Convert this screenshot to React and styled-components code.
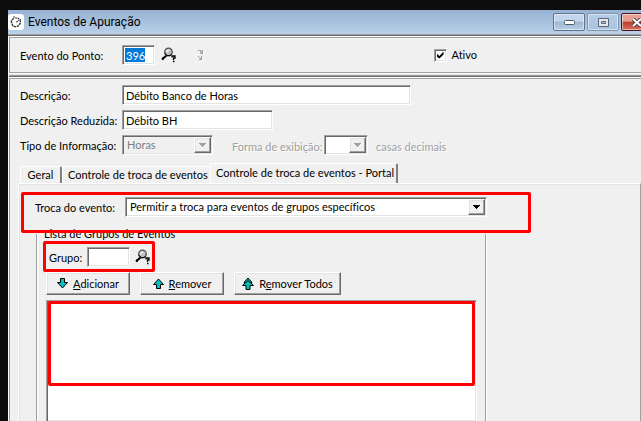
import React from "react";
import styled, { createGlobalStyle, css } from "styled-components";

const Global = createGlobalStyle`
  * { box-sizing: border-box; }
  html, body { margin: 0; background: #0d0d0d; overflow: hidden; }
  body, button, input, select {
    font-family: Lato, "Liberation Sans", sans-serif;
    font-size: 11px;
    line-height: 14px;
    font-variant-ligatures: none;
    color: #000;
  }
`;

const sunken = css`
  border: 1px solid;
  border-color: #a0a0a0 #fff #fff #a0a0a0;
  box-shadow: inset 1px 1px #696969, inset -1px -1px #e3e3e3;
`;
const raised = css`
  border: 1px solid;
  border-color: #fff #696969 #696969 #fff;
  box-shadow: inset -1px -1px #a0a0a0, inset 1px 1px #e3e3e3;
`;
const mark = css`
  outline: 3px solid #f00;
  outline-offset: -3px;
  border-radius: 2px;
`;

const Desktop = styled.div`
  display: flex;
  height: 100vh;
  padding: 10px 0 0 8px;
  overflow: hidden;
`;
const Window = styled.main`
  flex: 1;
  min-width: 0;
  display: flex;
  flex-direction: column;
  background: #f0f0f0;
`;
const TitleBar = styled.header`
  flex: none;
  display: flex;
  align-items: center;
  height: 24px;
  overflow: hidden;
  background: linear-gradient(#96b1d2, #b9d1ea);
`;
const Title = styled.h1`
  flex: 1;
  margin: 0 0 0 4px;
  font: 12px/16px Roboto, "Open Sans", sans-serif;
`;
const Controls = styled.div`
  display: flex;
  gap: 2px;
  margin-right: -12px;
`;
const WindowButton = styled.button`
  display: grid;
  place-items: center;
  width: 32px;
  height: 18px;
  padding: 0;
  border: 1px solid ${(p) => (p.$kind === "close" ? "#4b1420" : p.$kind === "muted" ? "#8093ad" : "#5f718b")};
  border-radius: 2px;
  box-shadow: inset 0 0 0 1px rgba(255, 255, 255, 0.5);
  background: ${(p) =>
    p.$kind === "close"
      ? "linear-gradient(#e6a192 0 45%, #bd3f2b 50%, #d4705a)"
      : p.$kind === "muted"
        ? "linear-gradient(#b4cbe5, #a9c3df)"
        : "linear-gradient(#c3d5ea 0 45%, #9db7d5 50%, #b5cde6)"};
`;
const TopEdge = styled.div`
  flex: none;
  height: 3px;
  background: linear-gradient(#a0a0a0 0 1px, #696969 1px 2px, #fff 2px);
`;
const Divider = styled.div`
  flex: none;
  height: 5px;
  background: linear-gradient(#fff 0 1px, #e3e3e3 1px 2px, #a0a0a0 2px 3px, #696969 3px 4px, #fff 4px);
`;
const Body = styled.div`
  flex: 1;
  min-height: 0;
  display: flex;
  flex-direction: column;
  border-left: 1px solid #fff;
`;
const HeaderPanel = styled.section`
  border: solid #a0a0a0;
  border-width: 1px 0 1px 1px;
  padding: 7px 0 7px 10px;
`;
const DetailPanel = styled.section`
  flex: 1;
  min-height: 0;
  display: flex;
  flex-direction: column;
  border: solid #a0a0a0;
  border-width: 1px 0 0 1px;
  padding: 6px 0 0 10px;
`;
const Row = styled.div`
  flex: none;
  display: flex;
  align-items: center;
  height: 20px;
  margin-bottom: ${(p) => p.$after || 0}px;
`;
const Label = styled.label`
  flex: none;
  width: ${(p) => (p.$width ? `${p.$width}px` : "auto")};
  padding-top: ${(p) => (p.$muted ? 4 : 2)}px;
  margin-left: ${(p) => p.$before || 0}px;
  white-space: nowrap;
  ${(p) => p.$muted && "color: #a0a0a0; text-shadow: 1px 1px #fff;"}
`;
const TextInput = styled.input`
  ${sunken}
  width: ${(p) => p.$width}px;
  height: 20px;
  padding: 0 3px;
  background: #fff;
  outline: none;
`;
const SelectedValue = styled(TextInput)`
  background: linear-gradient(#0078d7, #0078d7) 2px 2px / 20px 14px no-repeat #fff;
  color: #fff;
`;
const IconButton = styled.button`
  display: grid;
  place-items: center;
  width: 16px;
  height: 16px;
  padding: 0;
  border: 0;
  background: none;
  margin-left: ${(p) => p.$before}px;
`;
const CheckLabel = styled.label`
  display: flex;
  align-items: center;
  gap: 5px;
  margin-left: auto;
  margin-right: 164px;
`;
const Checkbox = styled.input`
  ${sunken}
  appearance: none;
  width: 13px;
  height: 13px;
  margin: 0;
  background: #fff;
  display: grid;
  place-items: center;
  &:checked::after {
    content: "";
    width: 7px;
    height: 7px;
    background: #000;
    clip-path: polygon(0 28%, 42% 66%, 100% 0, 100% 43%, 42% 100%, 0 72%);
  }
`;
const SelectBox = styled.div`
  ${sunken}
  flex: none;
  display: flex;
  width: ${(p) => p.$width}px;
  height: 20px;
  padding: 1px;
  background: ${(p) => p.$bg || "#fff"};
`;
const Select = styled.select`
  appearance: none;
  flex: 1;
  min-width: 0;
  border: 0;
  padding: 0 3px;
  background: transparent;
  outline: none;
  opacity: 1;
  &:disabled { color: #808080; }
`;
const Drop = styled.span`
  ${raised}
  display: grid;
  place-items: center;
  width: 17px;
  background: #f0f0f0;
  color: ${(p) => (p.$muted ? "#a0a0a0" : "#000")};
  pointer-events: none;
`;
const TabList = styled.div`
  flex: none;
  display: flex;
  align-items: flex-end;
  height: 20px;
`;
const Tab = styled.button`
  height: ${(p) => (p.$active ? 21 : 17)}px;
  margin-bottom: ${(p) => (p.$active ? -1 : 0)}px;
  padding: 0 5px ${(p) => (p.$active ? 2 : 0)}px;
  width: ${(p) => p.$width}px;
  white-space: nowrap;
  background: #f0f0f0;
  border: solid;
  border-width: 1px ${(p) => (p.$flat ? 0 : 2)}px 0 1px;
  border-color: #fff #808080 #fff #fff;
  border-radius: 2px 2px 0 0;
`;
const TabPanel = styled.div`
  flex: 1;
  min-height: 0;
  display: flex;
  flex-direction: column;
  margin-left: -2px;
  border: solid;
  border-width: 1px 1px 0;
  border-color: #fff #a0a0a0 #fff #fff;
  box-shadow: inset 1px 1px #e3e3e3;
  padding: 8px 0 0 2px;
`;
const EventRow = styled.div`
  ${mark}
  flex: none;
  z-index: 1;
  display: flex;
  align-items: center;
  width: 510px;
  height: 41px;
  padding: 5px 0 16px 14px;
`;
const Group = styled.fieldset`
  flex: 1;
  display: flex;
  flex-direction: column;
  min-width: 0;
  width: 450px;
  margin: -6px 0 0 15px;
  padding: 0 0 0 6px;
  border: solid #a0a0a0;
  border-width: 0 1px;
  box-shadow: 1px 0 #fff, inset 1px 0 #fff;
`;
const Legend = styled.legend`
  padding: 0 1px;
`;
const GroupRow = styled.div`
  ${mark}
  flex: none;
  display: flex;
  align-items: center;
  width: 112px;
  height: 31px;
  padding-left: 6px;
`;
const Actions = styled.div`
  flex: none;
  display: flex;
  gap: 10px;
  margin: 0 0 5px 3px;
`;
const Action = styled.button`
  ${raised}
  display: flex;
  align-items: center;
  justify-content: center;
  gap: 5px;
  width: ${(p) => p.$width}px;
  height: 23px;
  padding: 0;
  background: #f0f0f0;
  white-space: nowrap;
`;
const List = styled.div`
  ${sunken}
  flex: 1;
  width: 431px;
  margin-left: 3px;
  border-bottom: 0;
  padding: 0 1px;
  background: #fff;
`;
const Highlight = styled.div`
  ${mark}
  height: 85px;
`;

const AppIcon = () => (
  <svg width="16" height="16" viewBox="0 0 16 16">
    <rect width="16" height="16" rx="3" fill="#fff" />
    <path d="M6 4.500 3.500 6v3l1.500 3 3 1 3-1.500 1.500-3-.5-3L9.500 4" fill="none" stroke="#333" strokeWidth="1.300" strokeDasharray="2.500 .8" />
    <path d="M5 3h2M8 3v2M2.500 7h1M9 8l2-2M8 8h1" fill="none" stroke="#444" />
  </svg>
);
const SearchIcon = () => (
  <svg width="16" height="16" viewBox="0 0 16 16">
    <path d="M6 8 1 12.500" stroke="#000" strokeWidth="2" />
    <path d="M2 10v3" stroke="#000" />
    <circle cx="7.500" cy="5" r="3.800" fill="#c0c0c0" stroke="#505050" strokeWidth="1.300" />
    <path d="M3.700 6a4 4 0 0 0 7 1" fill="none" stroke="#000" />
    <path d="M6 5.500V4l2-1" fill="none" stroke="#fff" strokeWidth="1.300" />
    <path d="M11 10.500V9h3v2h-1.500v2M12 14.500h1.500" fill="none" stroke="#000" strokeWidth="1.300" />
  </svg>
);
const RefreshIcon = () => (
  <svg width="8" height="12" viewBox="0 0 8 12" fill="none" shapeRendering="crispEdges">
    <path d="M2 2.500h2l2 2M6.500 1.500v3H4M4 8.500v3h3" stroke="#fff" />
    <path d="M1 1.500h2l2 2M5.500 1v3.500H3M1 7l3 3M4.500 7v3.500H1.500" stroke="#a0a0a0" />
  </svg>
);
const Caret = () => (
  <svg width="7" height="4" viewBox="0 0 7 4" shapeRendering="crispEdges">
    <path d="M0 0h7v1H6v1H5v1H4v1H3V3H2V2H1V1H0z" fill="currentColor" />
  </svg>
);
const Arrow = ({ kind }) =>
  kind === "double" ? (
    <svg width="12" height="13" viewBox="0 0 12 13">
      <path d="M4 12.500h4v-4h3.500L8.500 5.500H10L6 1 2 5.500h1.500L.5 8.500H4z" fill="#00c0c0" stroke="#000" />
      <path d="M3 6.500 6 3.500 9 6.500" fill="none" stroke="#000" />
    </svg>
  ) : (
    <svg width="11" height="11" viewBox="0 0 11 11">
      <path
        d={kind === "down" ? "M3.500.5h4v4h3L5.500 10 .5 4.500h3z" : "M3.500 10.500h4v-4h3L5.500 1 .5 6.500h3z"}
        fill="#00c0c0"
        stroke="#000"
      />
    </svg>
  );

const Picker = ({ id, width, value, disabled, bg }) => (
  <SelectBox $width={width} $bg={bg}>
    <Select id={id} disabled={disabled} defaultValue={value}>
      <option>{value}</option>
    </Select>
    <Drop $muted={disabled}><Caret /></Drop>
  </SelectBox>
);

export default function App() {
  return (
    <Desktop>
      <Global />
      <Window>
        <TitleBar>
          <AppIcon />
          <Title>Eventos de Apuração</Title>
          <Controls>
            <WindowButton aria-label="Minimizar">
              <svg width="11" height="5"><rect x=".5" y=".5" width="10" height="4" rx="1" fill="#fff" stroke="#4f5a69" /></svg>
            </WindowButton>
            <WindowButton $kind="muted" aria-label="Maximizar">
              <svg width="11" height="9"><path d="M.5.5h10v8H.5zM3.500 3.500v2h4v-2z" fill="#e4e8ed" fillRule="evenodd" stroke="#5b6675" /></svg>
            </WindowButton>
            <WindowButton $kind="close" aria-label="Fechar">
              <svg width="12" height="9" viewBox="0 0 12 9">
                <path d="M2 1l8 7M10 1 2 8" stroke="#4d4650" strokeWidth="4" />
                <path d="M2 1l8 7M10 1 2 8" stroke="#fff" strokeWidth="2" />
              </svg>
            </WindowButton>
          </Controls>
        </TitleBar>
        <TopEdge />
        <Body>
          <HeaderPanel>
            <Row>
              <Label htmlFor="evento" $width={102}>Evento do Ponto:</Label>
              <SelectedValue id="evento" $width={33} defaultValue="396" />
              <IconButton $before={6} aria-label="Pesquisar evento"><SearchIcon /></IconButton>
              <IconButton $before={16} aria-label="Atualizar"><RefreshIcon /></IconButton>
              <CheckLabel><Checkbox type="checkbox" defaultChecked />Ativo</CheckLabel>
            </Row>
          </HeaderPanel>
          <Divider />
          <DetailPanel>
            <Row $after={5}>
              <Label htmlFor="descricao" $width={102}>Descrição:</Label>
              <TextInput id="descricao" $width={289} defaultValue="Débito Banco de Horas" />
            </Row>
            <Row $after={5}>
              <Label htmlFor="reduzida" $width={102}>Descrição Reduzida:</Label>
              <TextInput id="reduzida" $width={151} defaultValue="Débito BH" />
            </Row>
            <Row $after={8}>
              <Label htmlFor="tipo" $width={102}>Tipo de Informação:</Label>
              <Picker id="tipo" width={91} value="Horas" disabled bg="#f0f0f0" />
              <Label htmlFor="forma" $width={92} $before={19} $muted>Forma de exibição:</Label>
              <Picker id="forma" width={44} value="" disabled />
              <Label as="span" $before={8} $muted>casas decimais</Label>
            </Row>
            <TabList role="tablist">
              <Tab role="tab" $width={42}>Geral</Tab>
              <Tab role="tab" $width={148} $flat>Controle de troca de eventos</Tab>
              <Tab role="tab" $width={188} $active aria-selected="true">Controle de troca de eventos - Portal</Tab>
            </TabList>
            <TabPanel role="tabpanel">
              <EventRow>
                <Label htmlFor="troca" $width={90}>Troca do evento:</Label>
                <Picker id="troca" width={362} value="Permitir a troca para eventos de grupos específicos" />
              </EventRow>
              <Group>
                <Legend>Lista de Grupos de Eventos</Legend>
                <GroupRow>
                  <Label htmlFor="grupo" $width={38}>Grupo:</Label>
                  <TextInput id="grupo" $width={43} />
                  <IconButton $before={5} aria-label="Pesquisar grupo"><SearchIcon /></IconButton>
                </GroupRow>
                <Actions>
                  <Action $width={84}><Arrow kind="down" /><span><u>A</u>dicionar</span></Action>
                  <Action $width={84}><Arrow kind="up" /><span><u>R</u>emover</span></Action>
                  <Action $width={107}><Arrow kind="double" /><span>R<u>e</u>mover Todos</span></Action>
                </Actions>
                <List><Highlight /></List>
              </Group>
            </TabPanel>
          </DetailPanel>
        </Body>
      </Window>
    </Desktop>
  );
}
